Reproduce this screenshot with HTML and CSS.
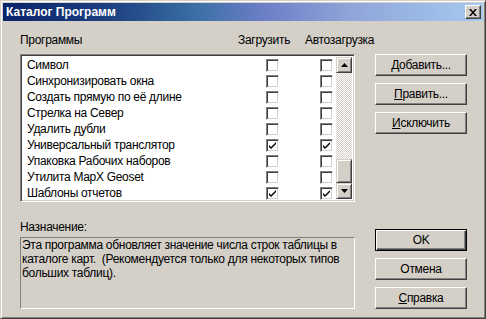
FILE: index.html
```html
<!DOCTYPE html>
<html lang="ru">
<head>
  <meta charset="UTF-8" />
  <title>Каталог Программ</title>
  <link rel="stylesheet" href="styles.css">
</head>
<body>

  <div class="window">
    <div class="titlebar">
      <span class="title">Каталог Программ</span>
      <button class="close-button" title="Закрыть">
        <svg width="8" height="7" viewBox="0 0 8 7"><path d="M0 0h2l2 2.5L6 0h2L5 3.5 8 7H6L4 4.5 2 7H0l3-3.5z" fill="#000"/></svg>
      </button>
    </div>

    <div class="content">
      <div class="left">
        <div class="headers">
          <span class="h-name">Программы</span>
          <span class="h-load">Загрузить</span>
          <span class="h-auto">Автозагрузка</span>
        </div>

        <div class="listbox">
          <div class="rows" id="rows"></div>
          <div class="scrollbar">
            <div class="sb-btn"><svg width="7" height="4" viewBox="0 0 7 4"><path d="M3.5 0L7 4H0z" fill="#000"/></svg></div>
            <div class="sb-track">
              <div class="sb-thumb"></div>
            </div>
            <div class="sb-btn"><svg width="7" height="4" viewBox="0 0 7 4"><path d="M0 0h7L3.5 4z" fill="#000"/></svg></div>
          </div>
        </div>

        <div class="purpose-label">Назначение:</div>
        <div class="purpose">Эта программа обновляет значение числа строк таблицы в каталоге карт.&nbsp; (Рекомендуется только для некоторых типов больших таблиц).</div>
      </div>

      <div class="right">
        <div class="group">
          <button class="btn"><u>Д</u>обавить...</button>
          <button class="btn"><u>П</u>равить...</button>
          <button class="btn"><u>И</u>сключить</button>
        </div>
        <div class="group bottom">
          <button class="btn default">OK</button>
          <button class="btn">Отмена</button>
          <button class="btn"><u>С</u>правка</button>
        </div>
      </div>
    </div>
  </div>

  <script>
    const PROGRAMS = [
      ["Символ", false, false],
      ["Синхронизировать окна", false, false],
      ["Создать прямую по её длине", false, false],
      ["Стрелка на Север", false, false],
      ["Удалить дубли", false, false],
      ["Универсальный транслятор", true, true],
      ["Упаковка Рабочих наборов", false, false],
      ["Утилита MapX Geoset", false, false],
      ["Шаблоны отчетов", true, true]
    ];

    const CHECK = '<svg width="9" height="9" viewBox="0 0 9 9"><path d="M1 4l2 2 5-5v2L3 8 1 6z" fill="#000"/></svg>';

    const rows = document.getElementById("rows");
    for (const [name, load, auto] of PROGRAMS) {
      const row = document.createElement("div");
      row.className = "row";
      row.innerHTML =
        `<span class="name">${name}</span>` +
        `<span class="check">${load ? CHECK : ""}</span>` +
        `<span class="check">${auto ? CHECK : ""}</span>`;
      rows.appendChild(row);
    }
  </script>

</body>
</html>
```

FILE: styles.css
```css
* {
  box-sizing: border-box;
}

body {
  margin: 0;
  background-color: #d4d0c8;
  font-family: "Liberation Sans", Arial, sans-serif;
  font-size: 12px;
  letter-spacing: -0.3px;
  color: #000;
}

.window {
  width: 486px;
  height: 319px;
  background-color: #d4d0c8;
  border: 1px solid;
  border-color: #d4d0c8 #404040 #404040 #d4d0c8;
  box-shadow: inset 1px 1px 0 #fff, inset -1px -1px 0 #808080;
  padding: 2px;
}

.titlebar {
  height: 18px;
  background: linear-gradient(to right, #0a246a 0%, #1c3f80 22%, #3a6ea5 40%, #6e7fc8 55%, #8fa4d8 72%, #a6caf0 100%);
  display: flex;
  align-items: center;
  justify-content: space-between;
  padding: 0 2px 0 3px;
}

.title {
  color: #fff;
  font-weight: bold;
  font-size: 12px;
  letter-spacing: 0;
}

.close-button {
  width: 16px;
  height: 14px;
  padding: 0;
  background-color: #d4d0c8;
  border: 1px solid;
  border-color: #fff #404040 #404040 #fff;
  box-shadow: inset -1px -1px 0 #808080;
  display: flex;
  align-items: center;
  justify-content: center;
}

.content {
  display: flex;
  gap: 20px;
  padding: 11px 0 0 17px;
}

.left {
  width: 335px;
  display: flex;
  flex-direction: column;
}

.headers {
  position: relative;
  height: 22px;
  padding-top: 1px;
}

.headers span {
  position: absolute;
  top: 1px;
}

.h-name { left: 0; }
.h-load { left: 218px; }
.h-auto { left: 285px; }

.listbox {
  height: 148px;
  display: flex;
  background-color: #fff;
  border: 1px solid;
  border-color: #808080 #fff #fff #808080;
  box-shadow: inset 1px 1px 0 #404040, inset -1px -1px 0 #d4d0c8;
  padding: 2px;
}

.rows {
  flex: 1;
}

.row {
  height: 16px;
  display: grid;
  grid-template-columns: 1fr 13px 13px;
  column-gap: 41px;
  align-items: center;
  padding: 0 3px 0 4px;
}

.check {
  width: 13px;
  height: 13px;
  background-color: #fff;
  border: 1px solid;
  border-color: #808080 #fff #fff #808080;
  box-shadow: inset 1px 1px 0 #404040, inset -1px -1px 0 #d4d0c8;
  display: flex;
  align-items: center;
  justify-content: center;
}

.scrollbar {
  width: 16px;
  display: flex;
  flex-direction: column;
}

.sb-btn {
  height: 16px;
  background-color: #d4d0c8;
  border: 1px solid;
  border-color: #d4d0c8 #404040 #404040 #d4d0c8;
  box-shadow: inset 1px 1px 0 #fff, inset -1px -1px 0 #808080;
  display: flex;
  align-items: center;
  justify-content: center;
}

.sb-track {
  flex: 1;
  display: flex;
  flex-direction: column;
  justify-content: flex-end;
  background: repeating-conic-gradient(#fff 0 25%, #d4d0c8 0 50%) 0 0 / 2px 2px;
}

.sb-thumb {
  height: 24px;
  background-color: #d4d0c8;
  border: 1px solid;
  border-color: #d4d0c8 #404040 #404040 #d4d0c8;
  box-shadow: inset 1px 1px 0 #fff, inset -1px -1px 0 #808080;
}

.purpose-label {
  margin-top: 18px;
  height: 17px;
}

.purpose {
  height: 72px;
  border: 1px solid;
  border-color: #808080 #fff #fff #808080;
  padding: 0 1px;
  line-height: 14px;
}

.right {
  width: 92px;
  display: flex;
  flex-direction: column;
  padding-top: 22px;
}

.group {
  display: flex;
  flex-direction: column;
  gap: 7px;
}

.group.bottom {
  margin-top: 95px;
}

.btn {
  height: 22px;
  font-family: inherit;
  font-size: 12px;
  letter-spacing: -0.3px;
  color: #000;
  background-color: #d4d0c8;
  border: 1px solid;
  border-color: #fff #404040 #404040 #fff;
  box-shadow: inset -1px -1px 0 #808080;
  padding: 0;
}

.btn.default {
  border: 1px solid #000;
  box-shadow: inset 1px 1px 0 #fff, inset -1px -1px 0 #404040, inset -2px -2px 0 #808080;
}
```
